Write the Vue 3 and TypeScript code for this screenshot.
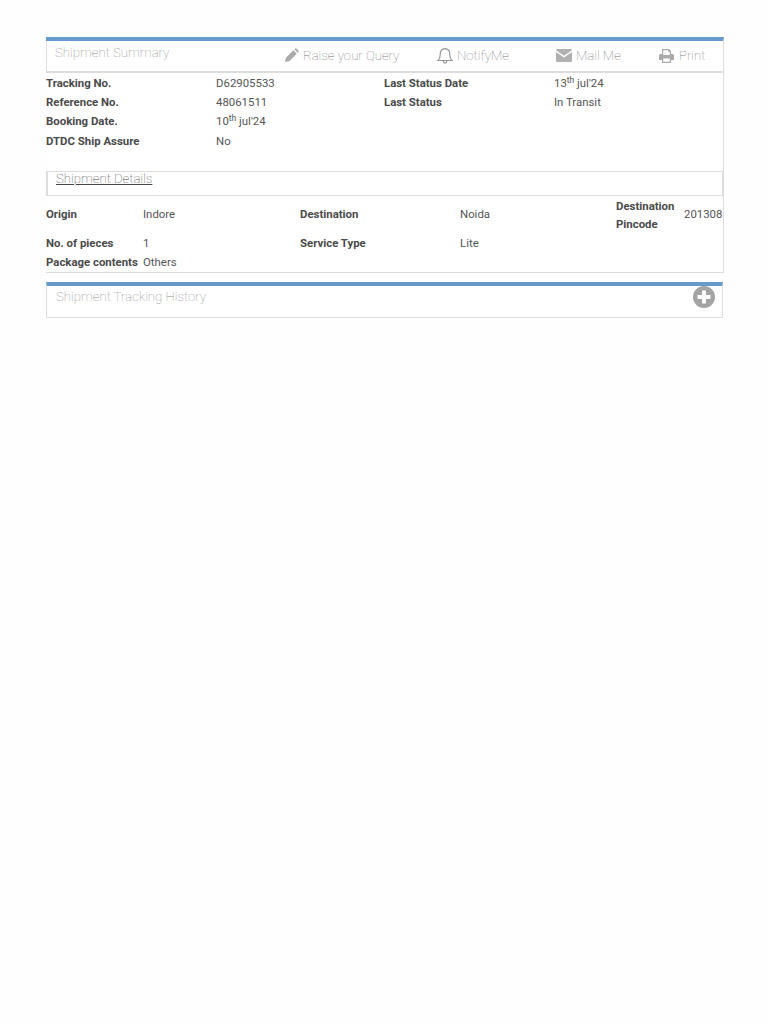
<script setup lang="ts">
const summary: [string, string, string?][] = [
  ['Tracking No.', 'D62905533'],
  ['Reference No.', '48061511'],
  ['Booking Date.', '10', " jul'24"],
  ['DTDC Ship Assure', 'No'],
]
</script>

<template>
  <div class="page">
    <section class="panel main">
      <header class="head">
        <div class="title">Shipment Summary</div>
        <div class="act query">
          <svg width="15" height="15" viewBox="0 0 16 16"><path fill="#aaa" d="M1 15l1-4.6 8-8 3.6 3.6-8 8zM11 1.400l1-1q.6-.4 1.200 0l2.400 2.400q.4.6 0 1.200l-1 1z"/></svg>
          <span>Raise your Query</span>
        </div>
        <div class="act notify">
          <svg width="16" height="17" viewBox="0 0 16 17"><path fill="none" stroke="#999" stroke-width="1.200" d="M1 13.500q2.200-2 2.200-6 0-5.500 4.800-5.800 4.800.3 4.800 5.800 0 4 2.200 6zM6.200 13.700q.2 2.300 1.800 2.300t1.800-2.300"/></svg>
          <span>NotifyMe</span>
        </div>
        <div class="act mail">
          <svg width="16" height="13" viewBox="0 0 16 13"><path fill="#b0b0b0" d="M1.200 0h13.600q1.200 0 1.200 1.200L8 6.800 0 1.200Q0 0 1.200 0zM0 3l8 5.600L16 3v8.800q0 1.200-1.200 1.200H1.200Q0 13 0 11.800z"/></svg>
          <span>Mail Me</span>
        </div>
        <div class="act print">
          <svg width="15" height="14" viewBox="0 0 15 14"><path fill="#aaa" fill-rule="evenodd" d="M3 0h7l2 2v3h1.500Q15 5 15 6.500V11h-3v3H3v-3H0V6.500Q0 5 1.500 5H3zM4.200 1.200V6h6.600V2.800H9.200V1.200zM4.200 9.500v3.300h6.600V9.500z"/></svg>
          <span>Print</span>
        </div>
      </header>

      <div class="summary">
        <div class="col">
          <div v-for="row in summary" :key="row[0]" class="pair">
            <b>{{ row[0] }}</b>
            <span>{{ row[1] }}<template v-if="row[2]"><sup>th</sup>{{ row[2] }}</template></span>
          </div>
        </div>
        <div class="col">
          <div class="pair"><b>Last Status Date</b><span>13<sup>th</sup> jul'24</span></div>
          <div class="pair"><b>Last Status</b><span>In Transit</span></div>
        </div>
      </div>

      <div class="details-bar"><span>Shipment Details</span></div>

      <div class="details">
        <b class="tall">Origin</b><span class="tall">Indore</span>
        <b class="tall">Destination</b><span class="tall">Noida</span>
        <b class="pin">Destination Pincode</b><span class="tall">201308</span>
        <b>No. of pieces</b><span>1</span>
        <b>Service Type</b><span>Lite</span>
        <i></i><i></i>
        <b>Package contents</b><span>Others</span>
      </div>
    </section>

    <section class="panel history">
      <div class="title">Shipment Tracking History</div>
      <svg class="plus" width="22" height="22" viewBox="0 0 22 22"><path fill="#a3a3a3" fill-rule="evenodd" d="M11 0a11 11 0 1 0 0 22 11 11 0 0 0 0-22zM9 4.500h4V9h4.500v4H13v4.500H9V13H4.500V9H9z"/></svg>
    </section>
  </div>
</template>

<style>
body { background: #fefefe; }
</style>

<style scoped>
.page {
  box-sizing: border-box;
  width: 768px;
  min-height: 1024px;
  padding: 37px 44px 0 46px;
  background: #fefefe;
  font-family: Roboto, "Liberation Sans", sans-serif;
  font-size: 11.400px;
  color: #555;
}
.panel {
  box-sizing: border-box;
  background: #fff;
  border: 1px solid #ddd;
  border-top: 4px solid #6699cc;
}
.main { height: 236px; border-left-width: 0; }
.head {
  display: grid;
  grid-template-columns: 237px 153px 119px 103px 1fr;
  height: 32px;
  box-sizing: border-box;
  border-bottom: 2px solid #ddd;
  border-left: 1px solid #ddd;
}
.title {
  padding: 3px 0 0 8px;
  font-size: 13.200px;
  line-height: 18px;
  font-weight: 100;
  color: #888;
}
.act {
  display: flex;
  align-items: center;
  gap: 4px;
  padding-bottom: 1px;
  font-size: 13.200px;
  font-weight: 100;
  color: #777;
}
.print { gap: 5px; }
.summary {
  display: grid;
  grid-template-columns: 338px 1fr;
  height: 98px;
  padding-top: 0.800px;
  box-sizing: border-box;
}
.pair {
  display: grid;
  grid-template-columns: 170px 1fr;
  height: 19.300px;
  line-height: 19.300px;
}
.col b, .details b { font-weight: 700; color: #4a4a4a; }
sup { font-size: 8.500px; line-height: 0; vertical-align: 4px; }
.details-bar {
  box-sizing: border-box;
  height: 25px;
  border: 1px solid #ddd;
  border-left-width: 2px;
  padding: 0 0 0 8px;
  line-height: 12px;
}
.details-bar span {
  font-size: 13.200px;
  font-weight: 100;
  line-height: 14px;
  color: #444;
  text-decoration: underline;
}
.details {
  display: grid;
  grid-template-columns: 97px 157px 160px 156px 68px 1fr;
  grid-template-rows: 37px 19px 19px;
  line-height: 18px;
}
.details b, .details span { align-self: center; white-space: nowrap; }
.details .tall { margin-bottom: 2px; }
.details .pin { white-space: normal; }
.history {
  position: relative;
  height: 36px;
  margin-top: 9px;
  width: 677px;
}
.history .title { padding: 2px 0 0 9px; }
.plus { position: absolute; right: 7px; top: 0; }
</style>
